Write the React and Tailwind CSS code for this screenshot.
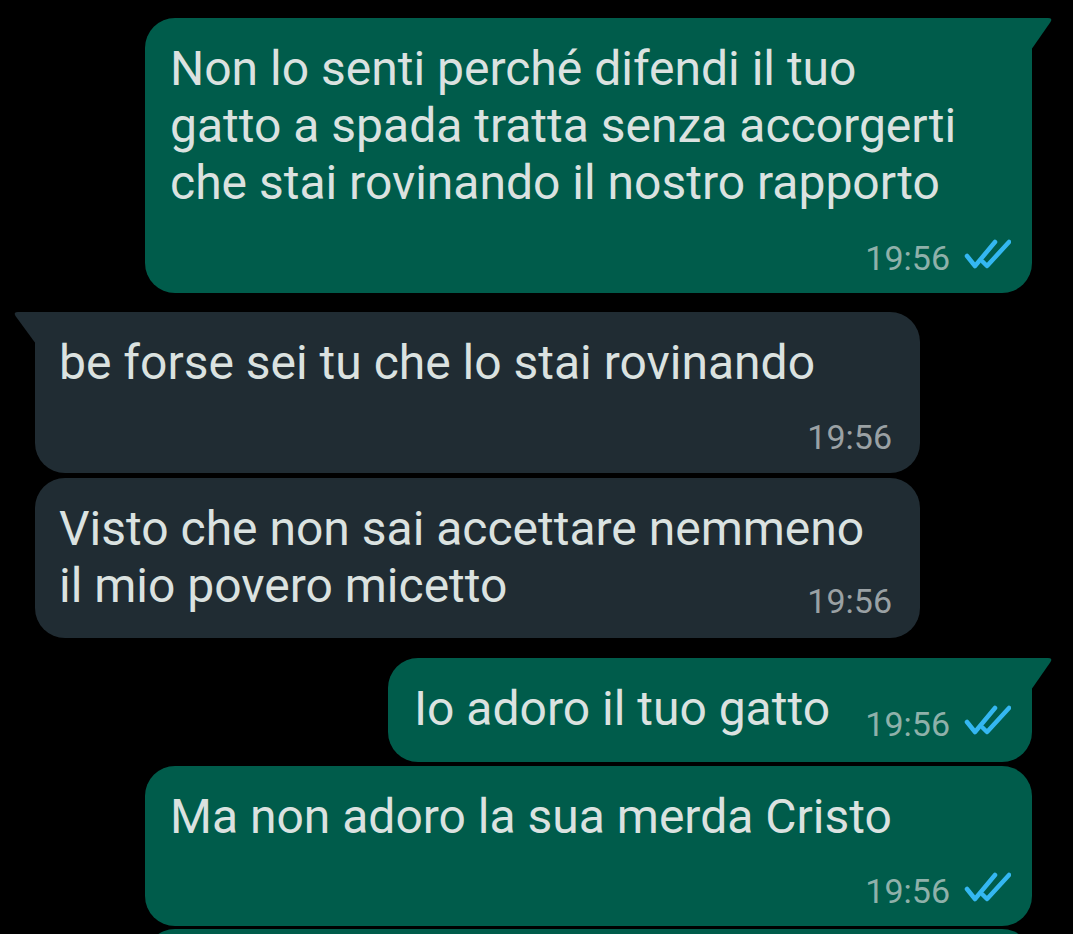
import React from 'react';

function Checks() {
  return (
    <svg width="48" height="38" viewBox="0 0 48 38" fill="none" className="shrink-0">
      <path d="M4 17 L12 27 L32 3" stroke="#34b7f1" strokeWidth="4.5" strokeLinecap="round" strokeLinejoin="round" />
      <path d="M20 23 L24 27 L46 3" stroke="#34b7f1" strokeWidth="4.5" strokeLinecap="round" strokeLinejoin="round" />
    </svg>
  );
}

function Time({ out }) {
  return (
    <div className={`flex items-center gap-[13px] self-end leading-[40px] text-[34px] ${out ? 'text-[#8fb1aa] pr-[21px]' : 'text-[#9aa1a4] pr-[28px]'}`}>
      <span>19:56</span>
      {out && <Checks />}
    </div>
  );
}

function TailOut() {
  return (
    <svg width="22" height="33" viewBox="0 0 22 33" className="absolute left-full top-0 -ml-px">
      <path d="M0 0 L17 0 Q22 0 19.5 4 L0 32 Z" fill="#005c4b" />
    </svg>
  );
}

function TailIn() {
  return (
    <svg width="23" height="33" viewBox="0 0 23 33" className="absolute right-full top-0 -mr-px">
      <path d="M23 0 L5 0 Q0 0 2.5 4 L23 32 Z" fill="#202c33" />
    </svg>
  );
}

export default function ChatScreen() {
  return (
    <div className="h-[934px] w-[1073px] overflow-hidden bg-black font-[Roboto,sans-serif] text-[#dbe2e0]">
      <div className="flex flex-col pt-[18px]">
        {/* outgoing, first of group */}
        <div className="relative self-end mr-[41px] w-[887px] rounded-[30px] rounded-tr-none bg-[#005c4b] pt-[22px] pb-[15px] flex flex-col">
          <TailOut />
          <div className="pl-[25px] text-[48px] leading-[57px] whitespace-nowrap">
            Non lo senti perché difendi il tuo<br />
            gatto a spada tratta senza accorgerti<br />
            che stai rovinando il nostro rapporto
          </div>
          <div className="mt-[27px] flex flex-col">
            <Time out />
          </div>
        </div>

        {/* incoming */}
        <div className="relative self-start ml-[35px] mt-[19px] w-[885px] rounded-[30px] rounded-tl-none bg-[#202c33] pt-[22px] pb-[16px] flex flex-col">
          <TailIn />
          <div className="pl-[24px] text-[48px] leading-[57px] whitespace-nowrap">
            be forse sei tu che lo stai rovinando
          </div>
          <div className="mt-[26px] flex flex-col">
            <Time />
          </div>
        </div>

        <div className="self-start ml-[35px] mt-[5px] w-[885px] rounded-[30px] bg-[#202c33] pt-[22px] pb-[17px] flex flex-col">
          <div className="pl-[24px] text-[48px] leading-[57px] whitespace-nowrap">
            Visto che non sai accettare nemmeno<br />
            il mio povero micetto
          </div>
          <div className="-mt-[33px] flex flex-col">
            <Time />
          </div>
        </div>

        {/* outgoing group */}
        <div className="relative self-end mr-[41px] mt-[20px] w-[644px] rounded-[30px] rounded-tr-none bg-[#005c4b] pt-[22px] pb-[18px] flex flex-col">
          <TailOut />
          <div className="pl-[26px] text-[48px] leading-[57px] whitespace-nowrap">
            Io adoro il tuo gatto
          </div>
          <div className="-mt-[33px] flex flex-col">
            <Time out />
          </div>
        </div>

        <div className="self-end mr-[41px] mt-[4px] w-[887px] rounded-[30px] bg-[#005c4b] pt-[22px] pb-[15px] flex flex-col">
          <div className="pl-[25px] text-[48px] leading-[57px] whitespace-nowrap">
            Ma non adoro la sua merda Cristo
          </div>
          <div className="mt-[26px] flex flex-col">
            <Time out />
          </div>
        </div>

        <div className="self-end mr-[41px] mt-[3px] w-[887px] h-[120px] rounded-[30px] bg-[#005c4b]" />
      </div>
    </div>
  );
}
